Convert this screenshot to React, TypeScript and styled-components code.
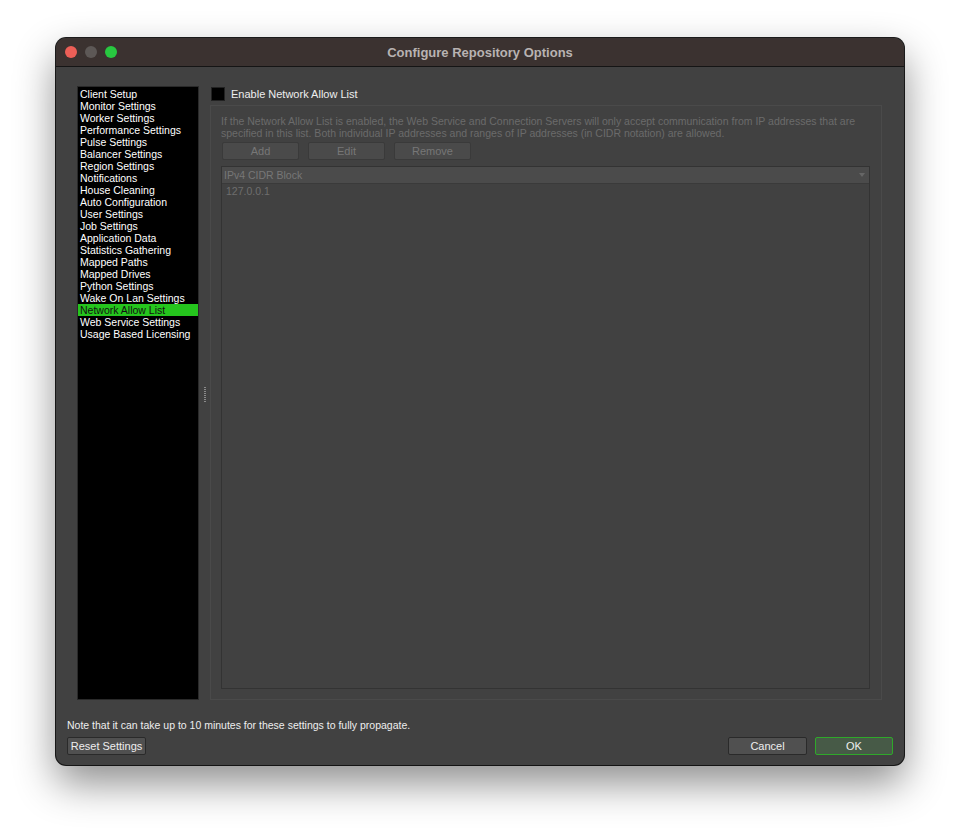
import React from "react";
import styled, { createGlobalStyle } from "styled-components";

const G = createGlobalStyle`
  html, body { margin: 0; padding: 0; background: #fff; }
  body { font-family: "Liberation Sans", Arial, sans-serif; }
`;

const Page = styled.div`
  width: 960px; height: 839px; padding: 38px 0 0 56px; box-sizing: border-box;
`;
const Win = styled.div`
  width: 848px; height: 727px; border-radius: 10px; overflow: hidden;
  background: #414141; display: flex; flex-direction: column;
  box-shadow: 0 18px 40px rgba(0,0,0,0.45), 0 0 0 1px #1e1e1e;
`;
const TitleBar = styled.div`
  height: 28px; flex: none; background: #3b3230; border-bottom: 1px solid #151515;
  display: flex; align-items: center; position: relative;
`;
const Lights = styled.div`display: flex; gap: 8px; padding-left: 9px;`;
const Light = styled.span<{ c: string }>`
  width: 12px; height: 12px; border-radius: 50%; background: ${p => p.c};
`;
const Title = styled.div`
  position: absolute; left: 0; right: 0; text-align: center;
  color: #b8b3b2; font-weight: bold; font-size: 13px;
`;
const Body = styled.div`
  flex: 1; display: flex; flex-direction: column; padding: 19px 11px 10px 11px;
`;
const Main = styled.div`flex: 1; display: flex; padding-left: 10px;`;
const List = styled.div`
  width: 122px; height: 614px; background: #000; border: 1px solid #2a2a2a;
  box-sizing: border-box; padding-top: 1px;
`;
const Item = styled.div<{ sel?: boolean }>`
  height: 12px; line-height: 12px; font-size: 10.5px; color: #fff; padding-left: 2px;
  white-space: nowrap; background: ${p => (p.sel ? "#25c51d" : "transparent")};
  color: ${p => (p.sel ? "#111" : "#fff")};
`;
const Splitter = styled.div`
  width: 11px; display: flex; align-items: center; justify-content: center;
`;
const Grip = styled.div`
  width: 2px; height: 16px;
  background: repeating-linear-gradient(#8a8a8a 0 1px, transparent 1px 2px);
`;
const Right = styled.div`flex: 1; display: flex; flex-direction: column;`;
const CheckRow = styled.div`
  display: flex; align-items: center; gap: 6px; height: 14px; margin: 1px 0 4px 1px;
  color: #eee; font-size: 11px;
`;
const Box = styled.span`width: 12px; height: 12px; background: #000; border: 1px solid #222;`;
const Group = styled.div`
  width: 672px; height: 595px; box-sizing: border-box; border: 1px solid #4a4a4a;
  display: flex; flex-direction: column; padding: 9px 11px 10px 10px;
`;
const Desc = styled.div`font-size: 10.5px; line-height: 12px; color: #6b6b6b;`;
const Buttons = styled.div`display: flex; gap: 9px; margin: 3px 0 6px 1px;`;
const Btn = styled.div<{ w?: number; ok?: boolean; dim?: boolean }>`
  width: ${p => p.w ?? 77}px; height: 18px; box-sizing: border-box;
  display: flex; align-items: center; justify-content: center;
  font-size: 11px; border-radius: 2px;
  color: ${p => (p.dim ? "#777" : "#eee")};
  background: ${p => (p.ok ? "#475a47" : p.dim ? "#4a4a4a" : "#505050")};
  border: 1px solid ${p => (p.ok ? "#2fa82a" : p.dim ? "#3a3a3a" : "#2a2a2a")};
`;
const Table = styled.div`
  flex: 1; border: 1px solid #333; display: flex; flex-direction: column;
`;
const Head = styled.div`
  height: 16px; background: #4b4b4b; border-bottom: 1px solid #3a3a3a;
  display: flex; align-items: center; justify-content: space-between;
  padding: 0 4px 0 2px; font-size: 10.5px; color: #777;
`;
const Arrow = styled.span`
  width: 0; height: 0; border-left: 3px solid transparent; border-right: 3px solid transparent;
  border-top: 4px solid #666;
`;
const Cell = styled.div`font-size: 10.5px; color: #6e6e6e; padding: 1px 4px; line-height: 12px;`;
const Note = styled.div`font-size: 10.5px; color: #eee; margin: 15px 0 6px 0;`;
const Footer = styled.div`display: flex; align-items: center; gap: 8px;`;
const Spacer = styled.div`flex: 1;`;

const items = ["Client Setup","Monitor Settings","Worker Settings","Performance Settings","Pulse Settings","Balancer Settings","Region Settings","Notifications","House Cleaning","Auto Configuration","User Settings","Job Settings","Application Data","Statistics Gathering","Mapped Paths","Mapped Drives","Python Settings","Wake On Lan Settings","Network Allow List","Web Service Settings","Usage Based Licensing"];

export default function App() {
  return (
    <Page>
      <G />
      <Win>
        <TitleBar>
          <Lights>
            <Light c="#ec5f57" /><Light c="#5d5856" /><Light c="#28c840" />
          </Lights>
          <Title>Configure Repository Options</Title>
        </TitleBar>
        <Body>
          <Main>
            <List>
              {items.map(i => <Item key={i} sel={i === "Network Allow List"}>{i}</Item>)}
            </List>
            <Splitter><Grip /></Splitter>
            <Right>
              <CheckRow><Box />Enable Network Allow List</CheckRow>
              <Group>
                <Desc>If the Network Allow List is enabled, the Web Service and Connection Servers will only accept communication from IP addresses that are specified in this list. Both individual IP addresses and ranges of IP addresses (in CIDR notation) are allowed.</Desc>
                <Buttons>
                  <Btn dim>Add</Btn><Btn dim>Edit</Btn><Btn dim>Remove</Btn>
                </Buttons>
                <Table>
                  <Head>IPv4 CIDR Block<Arrow /></Head>
                  <Cell>127.0.0.1</Cell>
                </Table>
              </Group>
            </Right>
          </Main>
          <Note>Note that it can take up to 10 minutes for these settings to fully propagate.</Note>
          <Footer>
            <Btn w={79}>Reset Settings</Btn>
            <Spacer />
            <Btn w={79}>Cancel</Btn>
            <Btn w={78} ok>OK</Btn>
          </Footer>
        </Body>
      </Win>
    </Page>
  );
}
